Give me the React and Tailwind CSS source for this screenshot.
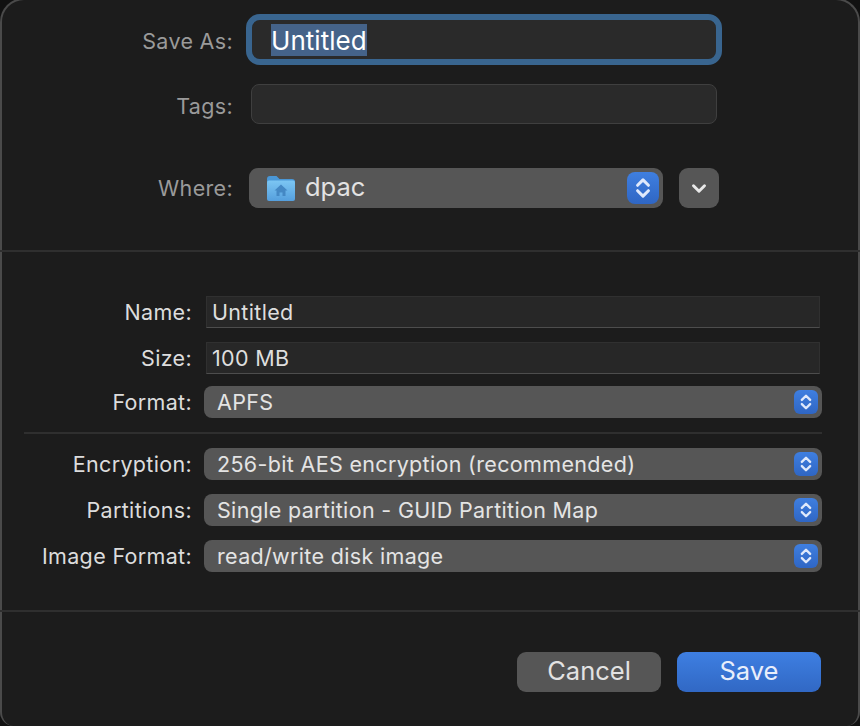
// Save As sheet, macOS dark, Disk Utility "New Blank Image"
const FONT = "font-['Inter','Liberation_Sans',sans-serif]";

function Stepper({ large = false }) {
  const size = large ? "w-[32px] h-[32px] rounded-[8px]" : "w-[24px] h-[24px] rounded-[6px]";
  return (
    <span className={`flex shrink-0 items-center justify-center bg-gradient-to-b from-[#3f7fe0] to-[#2f66c4] ${size}`}>
      <svg viewBox="0 0 24 24" className={large ? "w-[26px] h-[26px]" : "w-[20px] h-[20px]"} fill="none" stroke="#dfe9fb" strokeWidth="2.8" strokeLinecap="round" strokeLinejoin="round" aria-hidden="true">
        <path d="M7 9.5 12 4.5 17 9.5" />
        <path d="M7 14.5 12 19.5 17 14.5" />
      </svg>
    </span>
  );
}

function FolderIcon() {
  return (
    <svg viewBox="0 0 30 28" className="w-[30px] h-[28px] shrink-0" aria-hidden="true">
      <defs>
        <linearGradient id="folderBody" x1="0" y1="0" x2="0" y2="1">
          <stop offset="0" stopColor="#7cc6f3" />
          <stop offset="1" stopColor="#559fdd" />
        </linearGradient>
      </defs>
      <path d="M1 5Q1 2 4 2H10.5L13.5 5H26Q29 5 29 7.5V12H1Z" fill="#4a97d6" />
      <rect x="1" y="6.5" width="28" height="20.5" rx="2" fill="url(#folderBody)" />
      <path d="M15 10.5 8.5 16.5H10.5V22H13.5V18.5H16.5V22H19.5V16.5H21.5Z" fill="#4488c4" />
    </svg>
  );
}

function Label({ children }) {
  return <span className="w-[190px] shrink-0 pt-[2px] text-right text-[21.5px] leading-none tracking-[0.33px] text-[#dcdcdc]">{children}</span>;
}

function TextRow({ label, value }) {
  return (
    <div className="flex items-center">
      <Label>{label}</Label>
      <div className="ml-[14px] flex h-[32px] w-[614px] items-center border border-[#303030] border-b-[#4d4d4d] bg-[#272727] pl-[5px] text-[21.5px] tracking-[0.33px] text-[#dedede]">
        {value}
      </div>
    </div>
  );
}

function SelectRow({ label, value }) {
  return (
    <div className="flex items-center">
      <Label>{label}</Label>
      <div className="ml-[12px] flex h-[32px] w-[618px] items-center justify-between rounded-[8px] bg-[#565656] pl-[13px] pr-[4px] text-[21.5px] tracking-[0.33px] text-[#e4e4e4]">
        <span>{value}</span>
        <Stepper />
      </div>
    </div>
  );
}

export default function App() {
  return (
    <div className={`relative h-[726px] w-[860px] overflow-hidden bg-[#111111] ${FONT}`}>
      <div className="-mt-[2px] h-[728px] w-[860px] rounded-t-[24px] rounded-b-[14px] border-x-2 border-t-2 border-[#4a4a4a] border-b-0 bg-[#1c1c1c]">
        {/* top part: file name, tags, location */}
        <div className="flex h-[250px] flex-col">
          <div className="mt-[20px] flex items-center">
            <span className="w-[231px] shrink-0 pt-[4px] text-right text-[21.5px] tracking-[0.33px] text-[#9a9a9a]">Save As:</span>
            <div className="ml-[19px] flex h-[39px] w-[464px] items-center rounded-[8px] bg-[#2a2a2a] pl-[19px] text-[26px] tracking-[0.05px] outline-[6px] outline-[#39658f]">
              <span className="bg-[#456389] pt-[1px] leading-[31px] text-white">Untitled</span>
            </div>
          </div>
          <div className="mt-[25px] flex items-center">
            <span className="w-[231px] shrink-0 pt-[4px] text-right text-[21.5px] tracking-[0.33px] text-[#9a9a9a]">Tags:</span>
            <div className="ml-[18px] h-[40px] w-[466px] rounded-[8px] border border-[#3f3f3f] bg-[#2a2a2a]" />
          </div>
          <div className="mt-[44px] flex items-center">
            <span className="w-[231px] shrink-0 text-right text-[21.5px] tracking-[0.33px] text-[#9a9a9a]">Where:</span>
            <div className="ml-[16px] flex h-[40px] w-[414px] items-center rounded-[9px] bg-[#565656] pl-[17px] pr-[4px] text-[25.5px] text-[#e2e2e2]">
              <FolderIcon />
              <span className="ml-[9px] flex-1 pb-[2px]">dpac</span>
              <Stepper large />
            </div>
            <button className="ml-[16px] flex h-[40px] w-[40px] items-center justify-center rounded-[9px] bg-[#565656]">
              <svg viewBox="0 0 24 24" className="h-[22px] w-[22px]" fill="none" stroke="#e8e8e8" strokeWidth="3.2" strokeLinecap="round" strokeLinejoin="round" aria-hidden="true">
                <path d="M6 9.5 12 15.5 18 9.5" />
              </svg>
            </button>
          </div>
        </div>
        <div className="-mx-[2px] h-[2px] bg-[#2f2f2f]" />

        {/* image options */}
        <div className="flex h-[358px] flex-col pt-[44px]">
          <TextRow label="Name:" value="Untitled" />
          <div className="mt-[14px]"><TextRow label="Size:" value="100 MB" /></div>
          <div className="mt-[12px]"><SelectRow label="Format:" value="APFS" /></div>
          <div className="mt-[14px] ml-[22px] h-[2px] w-[798px] bg-[#2f2f2f]" />
          <div className="mt-[14px]"><SelectRow label="Encryption:" value="256-bit AES encryption (recommended)" /></div>
          <div className="mt-[14px]"><SelectRow label="Partitions:" value="Single partition - GUID Partition Map" /></div>
          <div className="mt-[14px]"><SelectRow label="Image Format:" value="read/write disk image" /></div>
        </div>
        <div className="-mx-[2px] h-[2px] bg-[#2f2f2f]" />

        {/* buttons */}
        <div className="mt-[40px] flex justify-end gap-[16px] pr-[37px]">
          <button className="h-[40px] w-[144px] rounded-[9px] bg-[#565656] pb-[2px] text-[25.5px] text-[#e2e2e2]">Cancel</button>
          <button className="h-[40px] w-[144px] rounded-[9px] bg-gradient-to-b from-[#3e7fe2] to-[#3168c4] pb-[2px] text-[25.5px] text-[#e8eefb]">Save</button>
        </div>
      </div>
    </div>
  );
}
